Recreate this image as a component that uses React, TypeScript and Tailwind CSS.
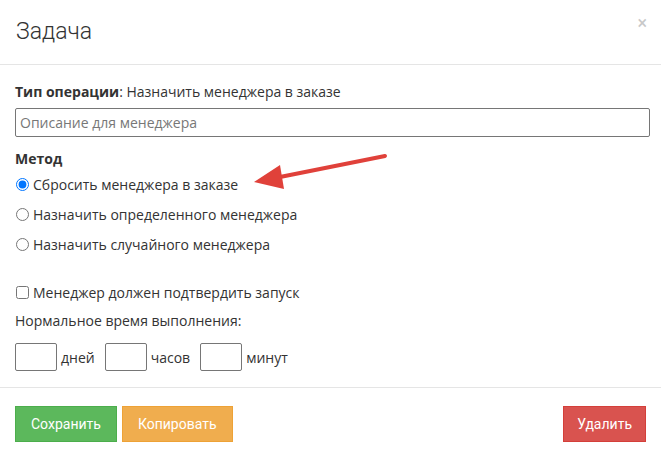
import React from 'react';

const body = { fontFamily: '"Open Sans", "Liberation Sans", sans-serif' };
const narrow = { fontFamily: 'Roboto, "Liberation Sans", sans-serif' };

function Radio({ checked, label }: { checked?: boolean; label: string }) {
  return (
    <label className="flex items-center h-[30px] text-[14px] text-[#333]">
      <input type="radio" name="method" defaultChecked={checked} className="w-[13px] h-[13px] ml-[1px] mr-[4px] accent-[#0075ff]" />
      {label}
    </label>
  );
}

function TimeBox({ unit }: { unit: string }) {
  return (
    <div className="flex items-center gap-[4px]">
      <div className="w-[42px] h-[28px] border border-[#767676] rounded-[2px]" />
      <span>{unit}</span>
    </div>
  );
}

export default function App() {
  return (
    <div className="w-[661px] h-[455px] bg-white relative overflow-hidden" style={body}>
      <div className="h-[65px] flex items-center justify-between pl-[16px] pr-[14px] border-b border-[#e5e5e5]">
        <h1 className="text-[23px] font-light text-[#333]" style={narrow}>Задача</h1>
        <span className="text-[#c8c8c8] text-[18px] mt-[-20px]" style={narrow}>×</span>
      </div>

      <div className="px-[15px] pt-[17px] h-[323px] text-[14px] text-[#333] border-b border-[#e5e5e5]">
        <div className="h-[20px] leading-[20px]"><b>Тип операции</b>: Назначить менеджера в заказе</div>
        <div className="mt-[6px] h-[29px] w-[635px] border border-[#767676] rounded-[2px] flex items-center px-[4px] text-[#777]">
          Описание для менеджера
        </div>
        <div className="mt-[12px] font-bold h-[20px] leading-[20px]">Метод</div>
        <div className="flex flex-col">
          <Radio checked label="Сбросить менеджера в заказе" />
          <Radio label="Назначить определенного менеджера" />
          <Radio label="Назначить случайного менеджера" />
        </div>
        <label className="mt-[23px] flex items-center h-[20px]">
          <input type="checkbox" className="w-[13px] h-[13px] ml-[1px] mr-[4px]" />
          Менеджер должен подтвердить запуск
        </label>
        <div className="mt-[9px] h-[20px] leading-[20px]">Нормальное время выполнения:</div>
        <div className="mt-[12px] flex items-center gap-[10px]">
          <TimeBox unit="дней" />
          <TimeBox unit="часов" />
          <TimeBox unit="минут" />
        </div>
      </div>

      <div className="flex items-center justify-between px-[15px] pt-[18px]" style={narrow}>
        <div className="flex gap-[5px]">
          <button className="h-[36px] px-[15px] bg-[#5cb85c] border border-[#4cae4c] text-white text-[14px]">Сохранить</button>
          <button className="h-[36px] px-[15px] bg-[#f0ad4e] border border-[#eea236] text-white text-[14px]">Копировать</button>
        </div>
        <button className="h-[36px] px-[13px] bg-[#d9534f] border border-[#d43f3a] text-white text-[14px]">Удалить</button>
      </div>

      <svg className="absolute left-0 top-0 pointer-events-none" width="661" height="455">
        <line x1="385" y1="156" x2="275" y2="178" stroke="#e0413a" strokeWidth="4" strokeLinecap="round" />
        <polygon points="254,182 280,165 284,189" fill="#e0413a" />
      </svg>
    </div>
  );
}
